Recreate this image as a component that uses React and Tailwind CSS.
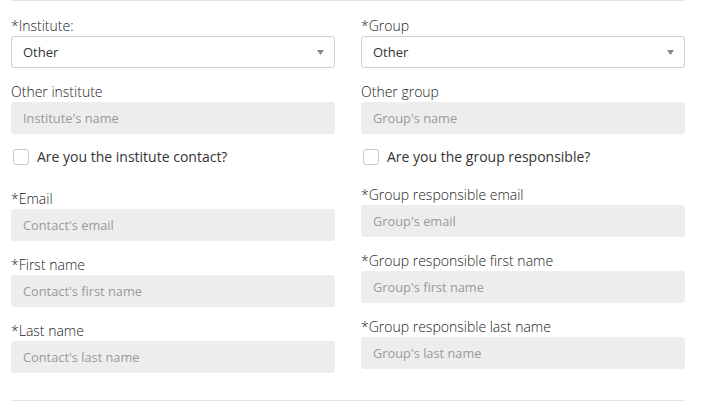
const font = { fontFamily: '"Open Sans", "Liberation Sans", sans-serif' };

function Label({ children }) {
  return <div className="h-5 text-[14px] font-light leading-5 text-[#222]">{children}</div>;
}

function Select({ value }) {
  return (
    <div className="flex h-8 items-center justify-between rounded-[3px] border border-[#cfcfcf] bg-white pl-[11px] pr-[10px] pt-px text-[13px] text-[#333]">
      <span>{value}</span>
      <svg width="7" height="5" viewBox="0 0 7 5">
        <path d="M0 0 L7 0 L3.5 5 Z" fill="#888" />
      </svg>
    </div>
  );
}

function Input({ placeholder }) {
  return (
    <input
      placeholder={placeholder}
      className="h-8 w-full rounded-[3px] bg-[#ededed] px-3 text-[12.8px] text-[#333] outline-none placeholder:text-[#9a9a9a]"
      style={font}
    />
  );
}

function Field({ label, placeholder }) {
  return (
    <div className="flex flex-col">
      <Label>{label}</Label>
      <Input placeholder={placeholder} />
    </div>
  );
}

function Check({ label }) {
  return (
    <label className="flex h-5 items-center gap-2 pl-[2px] pt-px text-[14px] text-[#333]">
      <span className="h-4 w-4 rounded-[3px] border border-[#c8c8c8] bg-white" />
      <span>{label}</span>
    </label>
  );
}

export default function App() {
  return (
    <div className="h-[402px] w-[707px] bg-white" style={font}>
      <div className="ml-[11px] w-[674px] border-t border-[#e2e2e2]" />
      <div className="ml-[11px] grid w-[674px] grid-cols-2 gap-x-[26px] pt-[15px]">
        <div className="flex flex-col">
          <Label>*Institute:</Label>
          <Select value="Other" />
          <div className="mt-[14px]">
            <Field label="Other institute" placeholder="Institute's name" />
          </div>
          <div className="mt-[12px]">
            <Check label="Are you the institute contact?" />
          </div>
          <div className="mt-[23px] flex flex-col gap-[14px]">
            <Field label="*Email" placeholder="Contact's email" />
            <Field label="*First name" placeholder="Contact's first name" />
            <Field label="*Last name" placeholder="Contact's last name" />
          </div>
        </div>
        <div className="flex flex-col">
          <Label>*Group</Label>
          <Select value="Other" />
          <div className="mt-[14px]">
            <Field label="Other group" placeholder="Group's name" />
          </div>
          <div className="mt-[12px]">
            <Check label="Are you the group responsible?" />
          </div>
          <div className="mt-[19px] flex flex-col gap-[14px]">
            <Field label="*Group responsible email" placeholder="Group's email" />
            <Field label="*Group responsible first name" placeholder="Group's first name" />
            <Field label="*Group responsible last name" placeholder="Group's last name" />
          </div>
        </div>
      </div>
      <div className="ml-[11px] mt-[27px] w-[674px] border-t border-[#e2e2e2]" />
    </div>
  );
}
